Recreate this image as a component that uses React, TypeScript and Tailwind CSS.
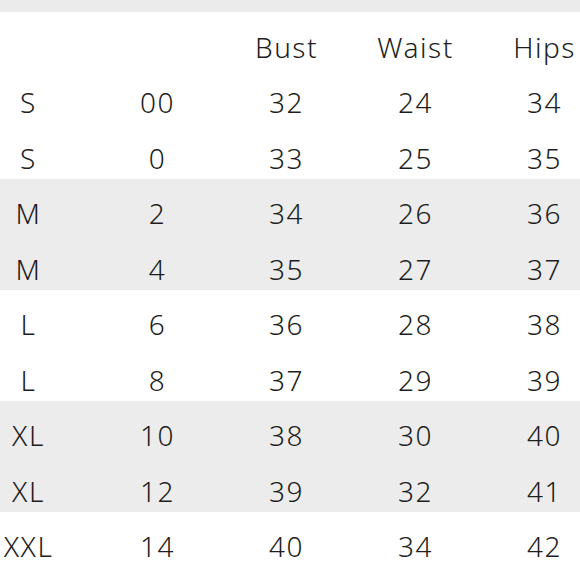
const HEAD = ['', '', 'Bust', 'Waist', 'Hips'];

const ROWS: [string, string, string, string, string][] = [
  ['S', '00', '32', '24', '34'],
  ['S', '0', '33', '25', '35'],
  ['M', '2', '34', '26', '36'],
  ['M', '4', '35', '27', '37'],
  ['L', '6', '36', '28', '38'],
  ['L', '8', '37', '29', '39'],
  ['XL', '10', '38', '30', '40'],
  ['XL', '12', '39', '32', '41'],
  ['XXL', '14', '40', '34', '42'],
];

const Row = ({ cells, shaded }: { cells: string[]; shaded: boolean }) => (
  <div className={`flex h-[55.5px] items-center pt-[14px] ${shaded ? 'bg-[#ececec]' : 'bg-white'}`}>
    <div className="ml-[-36px] flex">
      {cells.map((c, i) => (
        <div key={i} className="w-[129px] shrink-0 text-center leading-none">
          {c}
        </div>
      ))}
    </div>
  </div>
);

export default function App() {
  return (
    <div
      className="w-[580px] h-[580px] overflow-hidden bg-white text-[28px] font-light tracking-[1.5px] text-[#1e1e1e]"
      style={{ fontFamily: '"Noto Sans", sans-serif' }}
    >
      <div className="h-[12px] bg-[#ebebeb]" />
      <Row cells={HEAD} shaded={false} />
      {ROWS.map((r, i) => (
        <Row key={i} cells={r} shaded={i === 2 || i === 3 || i === 6 || i === 7} />
      ))}
    </div>
  );
}
